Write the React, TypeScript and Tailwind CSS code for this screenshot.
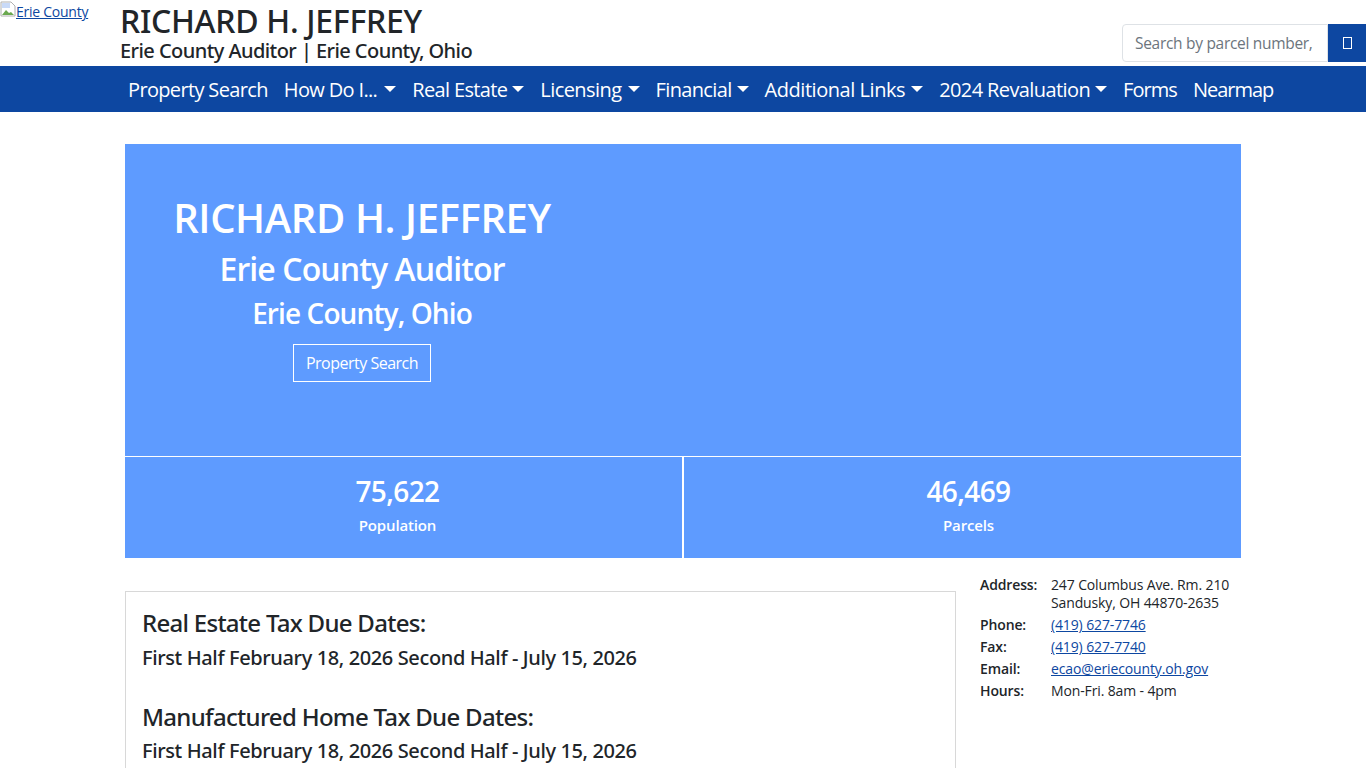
const font = "font-['Open_Sans','Noto_Sans',sans-serif]"
const medium = "font-['Noto_Sans',sans-serif] font-medium"

function NavItem({ label, caret, className = "tracking-[-0.65px]" }: { label: string; caret?: string; className?: string }) {
    return (
        <a href="#" className={`flex items-center px-2 pt-[2px] text-[20px] text-white whitespace-nowrap ${className}`}>
            {label}
            {caret && <span className={`${caret} mt-[-3px] w-0 h-0 border-x-[6px] border-x-transparent border-t-[6px] border-t-white`}></span>}
        </a>
    )
}

function Contact({ label, children }: { label: string; children: React.ReactNode }) {
    return (
        <div className="flex text-[14px] leading-[18px] mb-1 tracking-[-0.13px]">
            <b className="w-[71px] shrink-0 font-semibold">{label}</b>
            <div>{children}</div>
        </div>
    )
}

function Stat({ value, label, className }: { value: string; label: string; className: string }) {
    return (
        <div className={`pt-[15px] ${className}`}>
            <div className="text-[28px] leading-[38px] tracking-[-0.6px] font-semibold">{value}</div>
            <div className="mt-[3px] text-[15px] leading-[24px] tracking-[-0.15px] font-semibold">{label}</div>
        </div>
    )
}

export default function App() {
    return (
        <div className={`${font} h-screen overflow-hidden bg-white text-[#212529]`}>
            <header className="flex h-[66px]">
                <div className="w-[120px] shrink-0">
                    <a href="#" className="flex items-start text-[14px] leading-[24px] text-[#0d47a1] underline tracking-[-0.25px]">
                        <svg width="16" height="16" viewBox="0 0 16 16" className="mt-[1px] shrink-0">
                            <path d="M1 1h10l4 4v10H1z" fill="#fff" stroke="#b0b0b0" />
                            <path d="M2 2h8v5H2z" fill="#c9daf8" />
                            <path d="M2 14l4-5 3 3 2-1 3 3z" fill="#6aa84f" />
                        </svg>
                        Erie County
                    </a>
                </div>
                <div className="pt-[1px]">
                    <h1 className={`${medium} text-[32px] leading-[40px] tracking-[-0.3px]`}>RICHARD H. JEFFREY</h1>
                    <h2 className={`${medium} text-[20px] leading-[20px] tracking-[-0.56px]`}>Erie County Auditor | Erie County, Ohio</h2>
                </div>
                <div className="ml-auto flex items-end pb-[4px]">
                    <input
                        placeholder="Search by parcel number, owner or address"
                        className="w-[206px] h-[38px] px-3 text-[15.5px] tracking-[-0.3px] border border-[#dee2e6] rounded-l-sm outline-none placeholder:text-[#6c757d]"
                    />
                    <button className="w-[38px] h-[38px] bg-[#0d47a1] flex items-center justify-center">
                        <span className="block w-[9px] h-[12px] border border-white"></span>
                    </button>
                </div>
            </header>

            <nav className="flex h-[46px] bg-[#0d47a1] pl-[120px]">
                <NavItem label="Property Search" />
                <NavItem label="How Do I..." caret="ml-[7px]" />
                <NavItem label="Real Estate" caret="ml-[5px]" />
                <NavItem label="Licensing" caret="ml-[6px]" className="tracking-[-0.55px]" />
                <NavItem label="Financial" caret="ml-[5px]" />
                <NavItem label="Additional Links" caret="ml-[6px]" className="tracking-[-0.45px]" />
                <NavItem label="2024 Revaluation" caret="ml-[5px]" className="tracking-[-0.6px]" />
                <NavItem label="Forms" className="tracking-[-0.95px]" />
                <NavItem label="Nearmap" className="tracking-[-1px]" />
            </nav>

            <main className="w-[1116px] ml-[125px] mt-8">
                <section className="bg-[#5e9bff] text-white">
                    <div className="h-[312px] w-[474px] pt-[48px] flex flex-col items-center">
                        <h2 className="text-[40px] leading-[52px] tracking-[-0.4px] font-semibold whitespace-nowrap">RICHARD H. JEFFREY</h2>
                        <h3 className="text-[32px] leading-[50px] tracking-[-0.9px] font-semibold whitespace-nowrap">Erie County Auditor</h3>
                        <h4 className="text-[28px] leading-[38px] tracking-[-0.9px] font-semibold whitespace-nowrap">Erie County, Ohio</h4>
                        <a href="#" className="mt-[12px] h-[38px] w-[138px] flex items-center justify-center border border-white text-[16px] tracking-[-0.5px]">Property Search</a>
                    </div>
                    <div className="flex border-t border-white h-[102px] text-center">
                        <Stat value="75,622" label="Population" className="w-[559px] border-r-2 border-white pr-[12px]" />
                        <Stat value="46,469" label="Parcels" className="flex-1 pl-[12px]" />
                    </div>
                </section>

                <div className="flex mt-[18px]">
                    <div className="w-[831px] h-[400px] mt-[15px] border border-[#d8d8d8] px-4 py-[15px]">
                        <h4 className={`${medium} text-[24px] leading-[32px] tracking-[-0.72px]`}>Real Estate Tax Due Dates:</h4>
                        <p className={`${medium} mt-[4px] text-[20px] leading-[30px] tracking-[-0.38px]`}>First Half February 18, 2026 Second Half - July 15, 2026</p>
                        <h4 className={`${medium} mt-[28px] text-[24px] leading-[32px] tracking-[-0.7px]`}>Manufactured Home Tax Due Dates:</h4>
                        <p className={`${medium} mt-[3px] text-[20px] leading-[30px] tracking-[-0.38px]`}>First Half February 18, 2026 Second Half - July 15, 2026</p>
                    </div>
                    <div className="ml-[24px] flex-1">
                        <Contact label="Address:">247 Columbus Ave. Rm. 210<br />Sandusky, OH 44870-2635</Contact>
                        <Contact label="Phone:"><a href="#" className="text-[#0d47a1] underline">(419) 627-7746</a></Contact>
                        <Contact label="Fax:"><a href="#" className="text-[#0d47a1] underline">(419) 627-7740</a></Contact>
                        <Contact label="Email:"><a href="#" className="text-[#0d47a1] underline">ecao@eriecounty.oh.gov</a></Contact>
                        <Contact label="Hours:">Mon-Fri. 8am - 4pm</Contact>
                    </div>
                </div>
            </main>
        </div>
    )
}
